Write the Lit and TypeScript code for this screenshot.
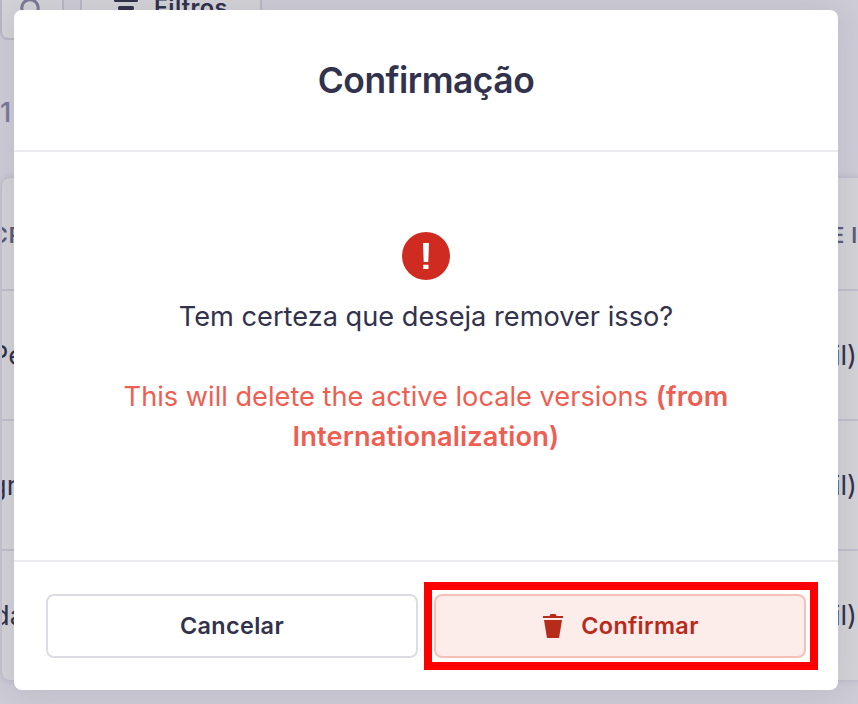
import { LitElement, html, css, svg } from "lit";
import { customElement } from "lit/decorators.js";

const searchIcon = svg`<circle cx="12" cy="12" r="8.3" fill="none" stroke="currentColor" stroke-width="3"/><path d="M18 18l7 7" stroke="currentColor" stroke-width="3"/>`;

@customElement("app-root")
class AppRoot extends LitElement {
  static styles = css`
    * { box-sizing: border-box; }
    :host {
      display: block; position: relative; width: 858px; height: 704px; overflow: hidden;
      background: #cccbd6; color: #32324d; font-family: Inter, "Liberation Sans", sans-serif;
    }
    .page { height: 704px; display: flex; flex-direction: column; }
    .toolbar { display: flex; gap: 16px; height: 40px; flex: none; }
    .tool {
      height: 64px; margin-top: -24px; border: 2px solid #b8b7c6; border-radius: 8px;
      background: #d2d2d7; display: flex; align-items: center; justify-content: center;
      font-size: 23.6px; font-weight: 600; letter-spacing: .4px; padding-bottom: 2px;
    }
    .search { width: 64px; color: #7b7998; }
    .search svg { margin-top: 6px; }
    .filter { width: 182px; gap: 16px; }
    .count { height: 138px; padding-top: 55px; font-size: 27.2px; font-weight: 500; line-height: 36px; color: #7b7998; flex: none; }
    .table {
      margin-left: 2px; width: 880px; height: 502px; flex: none; overflow: hidden; border-radius: 8px;
      background: #d2d2d7; box-shadow: 0 0 6px rgba(33,33,72,.15);
    }
    .row {
      width: 856px; height: 130px; border-top: 2px solid #bfbecb; display: flex;
      align-items: center; justify-content: space-between; font-size: 27.2px; white-space: nowrap;
    }
    .head { height: 111px; border-top: 0; font-size: 21.4px; font-weight: 600; color: #5b5a7b; padding-top: 2px; }
    .left { width: 40px; overflow: hidden; }
    .left span { display: block; }
    .s0 { margin-left: -10px; letter-spacing: 1px; }
    .s1 { margin-left: -11px; }
    .s2 { margin-left: -12px; }
    .s3 { margin-left: -9px; }
    .right { padding-right: 1px; }
    .head .right { padding-right: 0; letter-spacing: .8px; }
    .modal {
      position: absolute; left: 14px; top: 10px; width: 824px; height: 680px; background: #fff;
      border-radius: 8px; box-shadow: 0 2px 30px rgba(33,33,52,.1); display: flex; flex-direction: column;
    }
    .header {
      height: 142px; border-bottom: 2px solid #eaeaef; display: flex; align-items: center; justify-content: center;
      font-size: 35.4px; font-weight: 600; letter-spacing: -.5px;
    }
    .body { flex: 1; padding: 80px 64px 0; display: flex; flex-direction: column; align-items: center; font-size: 27.2px; line-height: 40px; text-align: center; }
    .alert { width: 48px; height: 48px; display: block; margin-bottom: 17px; }
    .warning { margin-top: 40px; color: #ee5e52; }
    .warning b { font-weight: 560; letter-spacing: .15px; }
    .footer { height: 130px; border-top: 2px solid #eaeaef; padding: 32px; display: flex; gap: 16px; }
    .btn {
      flex: 1; height: 64px; border: 2px solid #dcdce4; border-radius: 8px; display: flex; gap: 16px;
      align-items: center; justify-content: center; font-size: 23.4px; font-weight: 600; letter-spacing: .35px;
    }
    .btn span { margin-top: -2px; }
    .danger { background: #fcecea; border-color: #f5c0b8; color: #b72b1a; position: relative; }
    .mark { position: absolute; left: -12px; top: -14px; width: 394px; height: 88px; border: 8px solid #f00; }
  `;

  row(left: string, n: number) {
    return html`<div class="row"><div class="left"><span class="s${n}">${left}</span></div><div class="right">(Brazil)</div></div>`;
  }

  render() {
    return html`
      <div class="page">
        <div class="toolbar">
          <div class="tool search"><svg width="28" height="28" viewBox="0 0 28 28">${searchIcon}</svg></div>
          <div class="tool filter">
            <svg width="24" height="20" viewBox="0 0 24 20" fill="currentColor"><rect y="1" width="24" height="4" rx="1.5"/><rect x="4" y="9" width="16" height="4" rx="1.5"/><rect x="8" y="17" width="8" height="3" rx="1"/></svg>
            <span>Filtros</span>
          </div>
        </div>
        <div class="count">1</div>
        <div class="table">
          <div class="row head"><div class="left"><span class="s0">CR</span></div><div class="right">E I</div></div>
          ${this.row("Pe", 1)}${this.row("gr", 2)}${this.row("da", 3)}
        </div>
      </div>
      <div class="modal">
        <div class="header">Confirmação</div>
        <div class="body">
          <svg class="alert" viewBox="0 0 48 48"><circle cx="24" cy="24" r="24" fill="#d02b20"/><path d="M21 11h6l-.7 19h-4.6zM21.3 32.800h5.200V37h-5.200z" fill="#fff"/></svg>
          <div>Tem certeza que deseja remover isso?</div>
          <div class="warning">This will delete the active locale versions <b>(from<br>Internationalization)</b></div>
        </div>
        <div class="footer">
          <div class="btn"><span>Cancelar</span></div>
          <div class="btn danger">
            <svg width="24" height="24" viewBox="0 0 24 24" fill="currentColor"><path d="M2 2h6.500Q9 0 10 0h4q1 0 1.500 2H22v2H2zM3 6h18l-3 18H6z"/></svg>
            <span>Confirmar</span>
            <div class="mark"></div>
          </div>
        </div>
      </div>`;
  }
}
